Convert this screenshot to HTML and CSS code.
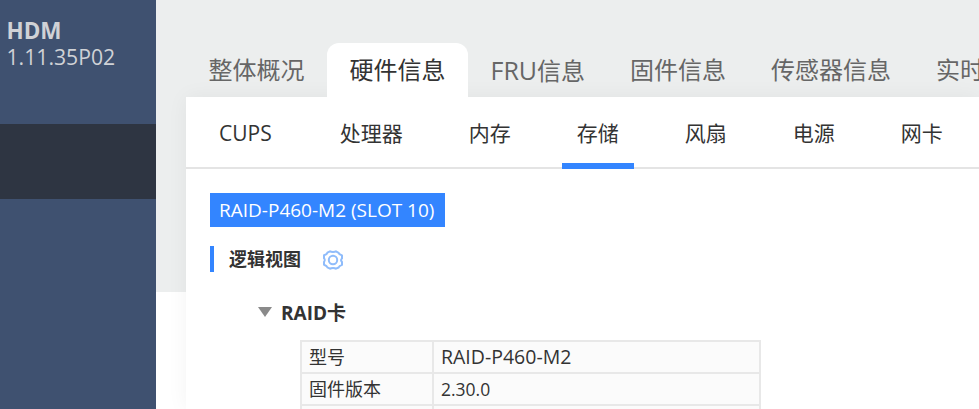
FILE: index.html
```html
<!DOCTYPE html>
<html lang="zh-CN">
<head>
<meta charset="utf-8">
<title>HDM</title>
<link rel="stylesheet" href="styles.css">
</head>
<body>
<div class="app">
  <aside class="sidebar">
    <div class="brand">
      <div class="brand-name">HDM</div>
      <div class="brand-version">1.11.35P02</div>
    </div>
    <div class="nav-active"></div>
  </aside>
  <main class="main">
    <nav class="tabs">
      <a class="tab">整体概况</a>
      <a class="tab tab-active">硬件信息</a>
      <a class="tab"><span class="latin">FRU</span>信息</a>
      <a class="tab">固件信息</a>
      <a class="tab">传感器信息</a>
      <a class="tab">实时</a>
    </nav>
    <section class="panel">
      <nav class="subtabs">
        <a class="subtab subtab-first">CUPS</a>
        <a class="subtab">处理器</a>
        <a class="subtab">内存</a>
        <a class="subtab subtab-active">存储</a>
        <a class="subtab">风扇</a>
        <a class="subtab">电源</a>
        <a class="subtab">网卡</a>
      </nav>
      <div class="content">
        <div class="controller">RAID-P460-M2 (SLOT 10)</div>
        <div class="section-title">
          <span>逻辑视图</span>
          <svg class="gear" width="22" height="22" viewBox="0 0 22 22" fill="none" stroke="#8fbcfb" stroke-width="2" stroke-linejoin="round">
            <path d="M8 2.3c1 .9 5 .9 6 0l2.6 1.500c.3 1.300 2.200 2.200 3.400 2.600v3c-1 1-1 2.600 0 3.600v2.900c-1.200.4-3.100 1.300-3.400 2.600L14 19.700c-1-.9-5-.9-6 0l-2.600-1.300c-.3-1.300-2.200-2.200-3.400-2.600v-2.900c1-1 1-2.600 0-3.600v-3c1.200-.4 3.100-1.300 3.400-2.600z"/>
            <circle cx="11" cy="11" r="4.200"/>
          </svg>
        </div>
        <div class="tree-title">
          <span class="caret"></span>
          <span>RAID卡</span>
        </div>
        <table class="info">
          <tr><th>型号</th><td>RAID-P460-M2</td></tr>
          <tr><th>固件版本</th><td class="num">2.30.0</td></tr>
          <tr><th>&nbsp;</th><td>&nbsp;</td></tr>
        </table>
      </div>
    </section>
  </main>
</div>
</body>
</html>
```
FILE: styles.css
```css
* { box-sizing: border-box; }
html, body { margin: 0; height: 100%; overflow: hidden; background: #fff; }
body { font-family: "Open Sans", "Noto Sans CJK SC", sans-serif; color: #333; }
.app { display: flex; width: 979px; height: 409px; overflow: hidden; }

.sidebar { position: relative; z-index: 1; flex: 0 0 156px; background: #3f5170; }
.brand { padding: 17px 0 0 6.5px; height: 124px; color: #d0d2d6; }
.brand-name { font-size: 22.5px; font-weight: 700; line-height: 28px; }
.brand-version { font-size: 21.2px; line-height: 24px; }
.nav-active { height: 75px; background: #2e3542; }

.main { flex: 1; min-width: 0; padding-left: 30px; background: linear-gradient(#eceeee 292px, #fff 292px); }
.tabs { display: flex; height: 97px; padding-top: 43px; white-space: nowrap; overflow: hidden; }
.tab { flex: none; padding: 0 22.5px; height: 54px; line-height: 54px; font-size: 24px; color: #666; border-radius: 12px 12px 0 0; }
.tab-active { background: #fff; color: #333; }
.latin { font-size: 25px; }

.panel { background: #fff; height: 312px; box-shadow: 0 0 20px rgba(0,0,0,.05); }
.subtabs { display: flex; gap: 36px; height: 72px; padding-left: 18px; border-bottom: 2px solid #e4e4e4; white-space: nowrap; }
.subtab { padding: 0 15px; height: 72px; line-height: 72px; font-size: 21px; color: #333; }
.subtab-first { padding-right: 17px; }
.subtab-active { border-bottom: 6px solid #3385ff; }

.content { padding: 24px 0 0 24px; }
.controller { display: inline-block; width: 235px; height: 34px; line-height: 34px; padding: 0 9px; background: #3385ff; color: #fff; font-size: 19px; white-space: nowrap; vertical-align: top; }
.section-title { display: flex; align-items: center; gap: 20.500px; height: 26px; margin-top: 19px; padding-left: 15px; border-left: 4px solid #3385ff; font-size: 18px; font-weight: 700; color: #333; line-height: 28px; }
.gear { flex: none; position: relative; top: 1px; }
.tree-title { display: flex; align-items: center; gap: 9px; height: 26px; margin: 27px 0 0 48px; font-size: 19px; font-weight: 700; color: #333; }
.caret { width: 0; height: 0; border-style: solid; border-width: 10px 7.5px 0; border-color: #8a8a8a transparent transparent; }
.info { margin: 15px 0 0 90px; width: 461px; border-collapse: collapse; table-layout: fixed; color: #333; }
.info th, .info td { height: 32px; padding: 0 7px; border: 2px solid #e8e8e8; font-weight: 400; text-align: left; background: #fbfbfb; line-height: 30px; }
.info th { width: 132px; font-size: 18px; }
.info td { font-size: 19.5px; border-left-width: 1px; }
.info td.num { font-size: 17.500px; }
```
